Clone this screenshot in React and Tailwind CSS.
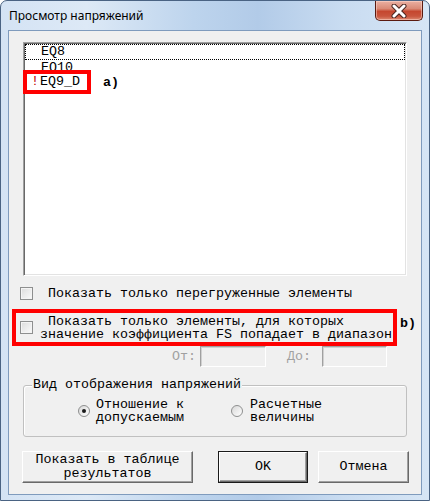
import React from 'react';

const mono = { fontFamily: '"Liberation Mono", "DejaVu Sans Mono", monospace' };

const Checkbox = () => (
  <div className="w-[13px] h-[13px] shrink-0 border border-[#8e8f8f] bg-gradient-to-br from-[#dcdcdc] to-[#fbfbfb] shadow-[inset_0_0_0_1px_#f4f4f4]" />
);

const Radio = ({ checked }) => (
  <div className="w-[12px] h-[12px] shrink-0 rounded-full border border-[#8e8f8f] bg-gradient-to-br from-[#d8d8d8] to-white flex items-center justify-center">
    {checked && <div className="w-[4px] h-[4px] rounded-full bg-[#1a1a1a]" />}
  </div>
);

const Button = ({ children, isDefault, className }) => (
  <div className={`${className} ${isDefault ? 'border border-[#1a1a1a]' : ''}`}>
    <div className="h-full w-full flex flex-col items-center justify-center bg-[#f0f0f0] border border-t-white border-l-white border-r-[#696969] border-b-[#696969] shadow-[inset_-1px_-1px_0_#a0a0a0] text-[13.33px] leading-[14px] text-black">
      {children}
    </div>
  </div>
);

const CloseButton = () => (
  <div className="w-[48px] h-[20px] rounded-b-[5px] border border-t-0 border-[#5a1a10] bg-[linear-gradient(180deg,#eab0a2_0%,#d98a77_40%,#c5472f_55%,#c9553d_80%,#dc8a72_100%)] flex items-center justify-center shadow-[inset_0_0_0_1px_rgba(255,220,210,0.5)]">
    <svg width="16" height="14" viewBox="0 0 16 14">
      <path d="M3 2 L13 12 M13 2 L3 12" stroke="#4a2620" strokeWidth="5" strokeLinecap="round" />
      <path d="M3 2 L13 12 M13 2 L3 12" stroke="#ffffff" strokeWidth="3" strokeLinecap="round" />
    </svg>
  </div>
);

export default function App() {
  return (
    <div className="w-[430px] h-[501px] rounded-t-[7px] border border-[#4a6383] bg-[linear-gradient(90deg,#d4e3f4_0%,#dde9f6_20%,#bdd4ed_45%,#b2cbe8_60%,#c9dcf1_80%,#d6e5f5_100%)] flex flex-col overflow-hidden">
      <div className="h-[29px] shrink-0 flex items-start justify-between pl-[8px] pr-[6px]">
        <span className="mt-[7px] text-[12px] leading-[16px] text-black" style={{ fontFamily: '"Noto Sans", "Open Sans", sans-serif' }}>
          Просмотр напряжений
        </span>
        <CloseButton />
      </div>
      <div className="mx-[7px] h-[465px] border border-[#7f9bbd] bg-[#f0f0f0] flex flex-col text-black" style={mono}>
        {/* list */}
        <div className="relative ml-[14px] mt-[11px] w-[384px] h-[234px] bg-white border border-t-[#a0a0a0] border-l-[#a0a0a0] border-r-white border-b-white shadow-[inset_1px_1px_0_#696969,inset_-1px_-1px_0_#e3e3e3]">
          <div className="pt-[1px] pl-[1px] pr-[1px] text-[13.33px] leading-[16px]">
            <div className="h-[16px] pl-[15px] border border-dotted border-black leading-[14px]">EQ8</div>
            <div className="h-[16px] pl-[16px]">EQ10</div>
            <div className="h-[16px] pl-[16px]">EQ9_D</div>
          </div>
          <div className="absolute left-[-1px] top-[27px] w-[68px] h-[24px] border-4 border-[#ff0000] bg-white flex items-center text-[13.33px] leading-[16px]">
            <span className="text-[#c00000] ml-[4px] w-[8px] text-center">!</span>
            <span className="ml-[1px]">EQ9_D</span>
          </div>
          <span className="absolute left-[79px] top-[32px] text-[13.33px] leading-[16px] font-bold">a)</span>
        </div>

        {/* checkbox 1 */}
        <div className="mt-[11px] h-[13px] flex items-center ml-[11px]">
          <Checkbox />
          <span className="ml-[15px] text-[13.33px] leading-[13px]">Показать только перегруженные элементы</span>
        </div>

        {/* checkbox 2 with annotation */}
        <div className="mt-[9px] flex items-center ml-[3px]">
          <div className="w-[385px] h-[37px] border-4 border-[#ff0000] flex items-center pl-[4px]">
            <Checkbox />
            <div className="ml-[7px] text-[13.33px] leading-[13px]">
              <div className="pl-[8px]">Показать только элементы, для которых</div>
              <div>значение коэффициента FS попадает в диапазон</div>
            </div>
          </div>
          <span className="ml-[3px] text-[13.33px] font-bold leading-[16px] -mt-[8px]">b)</span>
        </div>

        {/* from / to */}
        <div className="h-[21px] flex items-center text-[13.33px] text-[#a0a0a0]">
          <span className="ml-[163px]">От:</span>
          <div className="ml-[4px] w-[66px] h-[21px] bg-[#f0f0f0] border border-t-[#a0a0a0] border-l-[#a0a0a0] border-r-white border-b-white shadow-[inset_1px_1px_0_#d0d0d0]" />
          <span className="ml-[21px]">До:</span>
          <div className="ml-[11px] w-[65px] h-[21px] bg-[#f0f0f0] border border-t-[#a0a0a0] border-l-[#a0a0a0] border-r-white border-b-white shadow-[inset_1px_1px_0_#d0d0d0]" />
        </div>

        {/* group box */}
        <div className="relative ml-[14px] mt-[18px] w-[384px] h-[52px] border border-[#c0c0c0] rounded-[3px] shadow-[inset_1px_1px_0_#ffffff]">
          <span className="absolute left-[8px] top-[-9px] bg-[#f0f0f0] px-[1px] text-[13.33px] leading-[16px]">Вид отображения напряжений</span>
          <div className="flex items-center pt-[12px] text-[13.33px] leading-[13px]">
            <div className="w-[153px] ml-[54px] flex items-center">
              <Radio checked />
              <div className="ml-[6px]">
                <div>Отношение к</div>
                <div>допускаемым</div>
              </div>
            </div>
            <div className="flex items-center">
              <Radio />
              <div className="ml-[7px]">
                <div>Расчетные</div>
                <div>величины</div>
              </div>
            </div>
          </div>
        </div>

        {/* buttons */}
        <div className="mt-[14px] flex ml-[13px]">
          <Button className="w-[171px] h-[32px]">
            <span>Показать в таблице</span>
            <span>результатов</span>
          </Button>
          <Button isDefault className="ml-[25px] w-[90px] h-[32px]">OK</Button>
          <Button className="ml-[10px] w-[91px] h-[32px]">Отмена</Button>
        </div>
      </div>
    </div>
  );
}
